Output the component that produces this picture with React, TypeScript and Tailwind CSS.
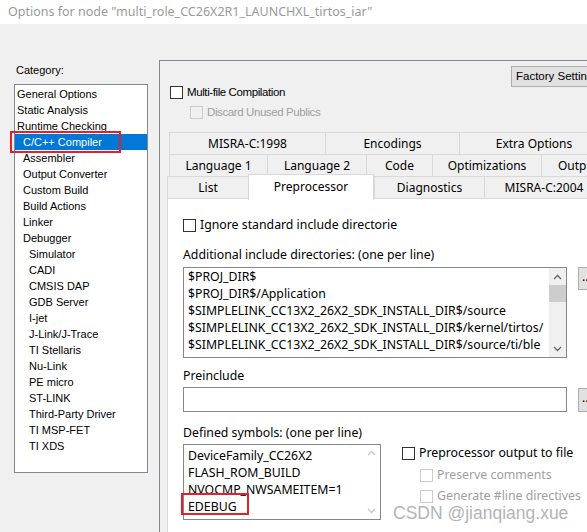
import React from "react";

const YH = { fontFamily: '"Noto Sans", "Noto Sans CJK SC", sans-serif' };
const TH = { fontFamily: '"Liberation Sans", Arial, sans-serif' };

function Box({ disabled }: { disabled?: boolean }) {
  return (
    <div
      className={
        "w-[13px] h-[13px] shrink-0 border " +
        (disabled ? "border-[#cccccc]" : "border-[#333333] bg-white")
      }
    />
  );
}

function Up({ color }: { color: string }) {
  return (
    <svg width="9" height="6" viewBox="0 0 9 6">
      <polyline points="1,5 4.5,1.5 8,5" fill="none" stroke={color} strokeWidth="1.3" />
    </svg>
  );
}
function Down({ color }: { color: string }) {
  return (
    <svg width="9" height="6" viewBox="0 0 9 6">
      <polyline points="1,1 4.5,4.5 8,1" fill="none" stroke={color} strokeWidth="1.3" />
    </svg>
  );
}

const categories: [string, number, boolean?][] = [
  ["General Options", 0],
  ["Static Analysis", 0],
  ["Runtime Checking", 0],
  ["C/C++ Compiler", 1, true],
  ["Assembler", 1],
  ["Output Converter", 1],
  ["Custom Build", 1],
  ["Build Actions", 1],
  ["Linker", 1],
  ["Debugger", 1],
  ["Simulator", 2],
  ["CADI", 2],
  ["CMSIS DAP", 2],
  ["GDB Server", 2],
  ["I-jet", 2],
  ["J-Link/J-Trace", 2],
  ["TI Stellaris", 2],
  ["Nu-Link", 2],
  ["PE micro", 2],
  ["ST-LINK", 2],
  ["Third-Party Driver", 2],
  ["TI MSP-FET", 2],
  ["TI XDS", 2],
];

const includes = [
  "$PROJ_DIR$",
  "$PROJ_DIR$/Application",
  "$SIMPLELINK_CC13X2_26X2_SDK_INSTALL_DIR$/source",
  "$SIMPLELINK_CC13X2_26X2_SDK_INSTALL_DIR$/kernel/tirtos/",
  "$SIMPLELINK_CC13X2_26X2_SDK_INSTALL_DIR$/source/ti/ble",
];

const symbols = ["DeviceFamily_CC26X2", "FLASH_ROM_BUILD", "NVOCMP_NWSAMEITEM=1", "EDEBUG"];

function Tab({ w, label, last }: { w: number; label: string; last?: boolean }) {
  return (
    <div
      className={
        "h-full shrink-0 flex items-center justify-center border-l border-[#d9d9d9] whitespace-nowrap text-[12px] text-black " +
        (last ? "border-r" : "")
      }
      style={{ width: w }}
    >
      {label}
    </div>
  );
}

export default function App() {
  return (
    <div className="relative w-[587px] h-[532px] overflow-hidden bg-[#f0f0f0]" style={YH}>
      {/* title bar */}
      <div className="h-[24px] bg-white pl-[8px] text-[12.5px] leading-[24px] text-[#9a9a9a] whitespace-nowrap">
        Options for node "multi_role_CC26X2R1_LAUNCHXL_tirtos_iar"
      </div>

      <div className="flex">
        {/* left column */}
        <div className="w-[159px] shrink-0 pl-[14px]">
          <div className="mt-[38px] h-[16px] leading-[16px] pl-[2px] text-[11px] text-black" style={TH}>
            Category:
          </div>
          <div className="mt-[6px] w-[134px] h-[389px] border border-[#828790] bg-white pt-[1px]" style={TH}>
            {categories.map(([name, lvl, sel]) => (
              <div
                key={name}
                className={
                  "h-[16px] leading-[16px] text-[11px] whitespace-nowrap " +
                  (sel ? "bg-[#0078d7] text-white " : "text-black ") +
                  (lvl === 0 ? "pl-[2px]" : lvl === 1 ? "pl-[8px]" : "pl-[14px]")
                }
              >
                {name}
              </div>
            ))}
          </div>
        </div>

        {/* right group box */}
        <div className="mt-[36px] w-[500px] shrink-0 h-[600px] border-l border-t border-[#828790]">
          <div className="flex">
            <div className="w-[351px] shrink-0 pl-[10px] pt-[25px]" style={TH}>
              <div className="flex items-center h-[13px] gap-[4px]">
                <Box />
                <span className="text-[11.5px] tracking-[-0.4px] text-black whitespace-nowrap">Multi-file Compilation</span>
              </div>
              <div className="flex items-center h-[13px] gap-[4px] mt-[7px] pl-[20px]">
                <Box disabled />
                <span className="text-[11.5px] tracking-[-0.4px] text-[#a0a0a0] whitespace-nowrap">Discard Unused Publics</span>
              </div>
            </div>
            <div className="pt-[5px]">
              <div
                className="h-[21px] w-[110px] border border-[#adadad] bg-[#e1e1e1] pl-[4px] text-[11.5px] leading-[19px] text-black whitespace-nowrap"
                style={TH}
              >
                Factory Settings
              </div>
            </div>
          </div>

          {/* tabs */}
          <div className="mt-[13px]">
            <div className="h-[22px] ml-[9px] flex border-t border-[#d9d9d9]">
              <Tab w={156} label="MISRA-C:1998" />
              <Tab w={134} label="Encodings" />
              <Tab w={150} label="Extra Options" last />
            </div>
            <div className="h-[22px] ml-[9px] flex border-t border-[#d9d9d9]">
              <Tab w={98} label="Language 1" />
              <Tab w={99} label="Language 2" />
              <Tab w={66} label="Code" />
              <Tab w={109} label="Optimizations" />
              <Tab w={74} label="Output" last />
            </div>
            <div className="h-[22px] ml-[7px] flex border-t border-[#d9d9d9]">
              <Tab w={81} label="List" />
              <div className="relative z-10 -mt-[3px] h-[26px] w-[126px] shrink-0 bg-white border-l border-r border-t border-[#d9d9d9] flex items-center justify-center text-[12px] text-black pb-[1px]">
                Preprocessor
              </div>
              <Tab w={110} label="Diagnostics" />
              <Tab w={120} label="MISRA-C:2004" last />
            </div>

            {/* tab page */}
            <div className="ml-[7px] h-[400px] bg-white border-t border-l border-[#d9d9d9] pl-[15px] pt-[20px] text-[12.3px] text-black">
              <div className="flex items-center h-[13px] gap-[4px]">
                <Box />
                <span className="w-[197px] overflow-hidden whitespace-nowrap">Ignore standard include directories</span>
              </div>
              <div className="mt-[15px] h-[16px] leading-[16px] whitespace-nowrap">
                Additional include directories: (one per line)
              </div>
              <div className="mt-[4px] flex items-start">
                <div className="w-[384px] h-[91px] border border-[#828790] flex">
                  <div className="flex-1 pl-[4px] overflow-hidden">
                    {includes.map((l) => (
                      <div key={l} className="h-[17px] leading-[17px] whitespace-nowrap">
                        {l}
                      </div>
                    ))}
                  </div>
                  <div className="w-[17px] h-full bg-[#f0f0f0] flex flex-col items-center">
                    <div className="h-[17px] flex items-center justify-center">
                      <Up color="#606060" />
                    </div>
                    <div className="w-full h-[17px] bg-[#cdcdcd]" />
                    <div className="flex-1" />
                    <div className="h-[17px] flex items-center justify-center">
                      <Down color="#606060" />
                    </div>
                  </div>
                </div>
                <div className="ml-[11px] w-[24px] h-[23px] border border-[#adadad] bg-[#e1e1e1] text-[12px] leading-[18px] pl-[3px]">
                  ...
                </div>
              </div>
              <div className="mt-[10px] h-[16px] leading-[16px]">Preinclude</div>
              <div className="mt-[3px] flex items-start">
                <div className="w-[384px] h-[25px] border border-[#828790] bg-white" />
                <div className="ml-[11px] mt-[1px] w-[24px] h-[24px] border border-[#adadad] bg-[#e1e1e1] text-[12px] leading-[18px] pl-[3px]">
                  ...
                </div>
              </div>
              <div className="mt-[13px] h-[16px] leading-[16px] whitespace-nowrap">Defined symbols: (one per line)</div>
              <div className="mt-[3px] flex items-start">
                <div className="w-[198px] h-[76px] border border-[#828790] flex">
                  <div className="flex-1 pl-[4px] pt-[2px] overflow-hidden">
                    {symbols.map((l) => (
                      <div key={l} className="h-[17px] leading-[17px] whitespace-nowrap">
                        {l}
                      </div>
                    ))}
                  </div>
                  <div className="w-[17px] h-full flex flex-col items-center justify-between py-[5px]">
                    <Up color="#c8c8c8" />
                    <Down color="#c8c8c8" />
                  </div>
                </div>
                <div className="ml-[21px] pt-[3px]">
                  <div className="flex items-center h-[13px] gap-[4px]">
                    <Box />
                    <span className="whitespace-nowrap">Preprocessor output to file</span>
                  </div>
                  <div className="flex items-center h-[13px] gap-[4px] mt-[9px] ml-[18px]">
                    <Box disabled />
                    <span className="whitespace-nowrap text-[#a0a0a0]">Preserve comments</span>
                  </div>
                  <div className="flex items-center h-[13px] gap-[4px] mt-[8px] ml-[18px]">
                    <Box disabled />
                    <span className="whitespace-nowrap text-[#a0a0a0]">Generate #line directives</span>
                  </div>
                </div>
              </div>
            </div>
          </div>
        </div>
      </div>

      {/* annotations */}
      <div className="absolute left-[10px] top-[131px] w-[111px] h-[22px] border-2 border-[#e5202a]" />
      <div className="absolute left-[262px] top-[174px] w-[97px] h-[24px] border-2 border-[#e5202a]" />
      <div className="absolute left-[181px] top-[493px] w-[68px] h-[22px] border-2 border-[#e5202a]" />

      {/* watermark */}
      <div
        className="absolute left-[393px] top-[502px] text-[17.5px] leading-[22px] text-[#b4b4b4] whitespace-nowrap"
        style={TH}
      >
        CSDN @jianqiang.xue
      </div>
    </div>
  );
}
